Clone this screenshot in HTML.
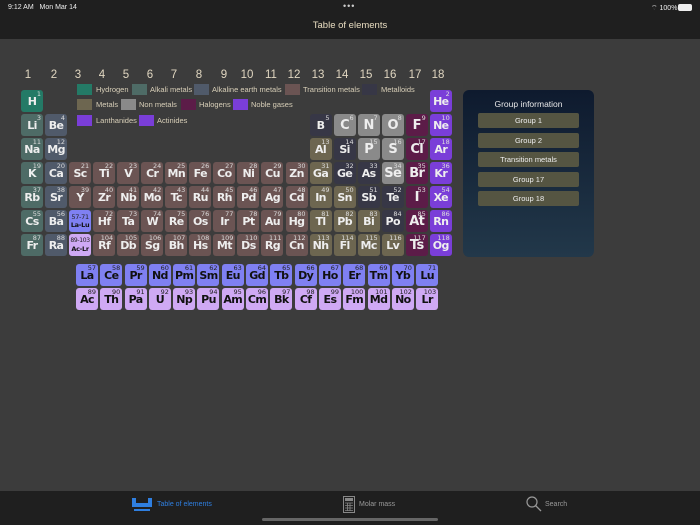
<!DOCTYPE html>
<html><head><meta charset="utf-8"><style>
*{margin:0;padding:0;box-sizing:border-box}
body{width:700px;height:525px;background:#3c3c3c;font-family:"Liberation Sans",sans-serif;position:relative;overflow:hidden;color:#ddd}
.top{position:absolute;left:0;top:0;width:700px;height:39px;background:#1f1f1f}
.bot{position:absolute;left:0;top:491px;width:700px;height:34px;background:#1f1f1f}
.g{position:absolute;top:90px;left:21px;display:grid;grid-template-columns:repeat(18,22px);grid-auto-rows:22px;column-gap:2.06px;row-gap:2px}
.l{position:absolute;left:76px;top:264px;display:grid;grid-template-columns:repeat(15,22px);grid-auto-rows:22px;column-gap:2.3px;row-gap:2px}
.g div,.l div{border-radius:3px;position:relative;font-family:"DejaVu Sans",sans-serif;font-weight:bold;font-size:11px;color:#eee;text-align:center;line-height:23px;letter-spacing:-0.6px;white-space:nowrap}
.g div i,.l div i{position:absolute;right:2px;top:1px;line-height:7px;font-style:normal;font-weight:normal;font-size:6.5px;color:#ddd;letter-spacing:0}
.h{background:#247a66}.a{background:#4e6b66}.e{background:#505a6a}.t{background:#6b5453}.m{background:#373746}.x{background:#6d6650}.n{background:#8a8a8a;font-size:13px!important}.ha{background:#5c1c48;font-size:13px!important}.ng{background:#7a3ed8}.la{background:#7f80f2}.ac{background:#cfa9f4}
.la,.ac{color:#111!important}.la i,.ac i{color:#222!important}
.gn{position:absolute;top:69px;font-size:11.5px;color:#e0d6c0;width:22px;text-align:center}
.sw{position:absolute;width:15px;height:11px}
.lt{position:absolute;font-size:7.5px;color:#d8cfb8}
.panel{position:absolute;left:463px;top:90px;width:131px;height:167px;border-radius:6px;background:linear-gradient(#0e1a2e,#22384a)}
.btn{position:absolute;left:15px;width:101px;height:15px;background:#555542;border-radius:2px;font-size:7.5px;color:#eee;text-align:center;line-height:15px}
.blk{display:flex;flex-direction:column;justify-content:center;line-height:8px!important;font-size:6.5px!important;letter-spacing:-0.3px!important;overflow:hidden}
</style></head><body>
<div class="top"></div>
<div style="position:absolute;left:8px;top:4px;font-size:7px;color:#eee">9:12 AM&nbsp;&nbsp; Mon Mar 14</div>
<div style="position:absolute;left:343px;top:1px;font-size:9px;color:#ccc;letter-spacing:1px">•••</div>
<div style="position:absolute;left:651px;top:4px;font-size:7px;color:#eee">⌔ 100%</div>
<div style="position:absolute;left:678px;top:4px;width:14px;height:7px;background:#eee;border-radius:2px"></div>
<div style="position:absolute;left:0;width:700px;top:20px;text-align:center;font-size:9.5px;color:#e8dcc0">Table of elements</div>

<div class="gn" style="left:17px">1</div><div class="gn" style="left:43px">2</div><div class="gn" style="left:67px">3</div><div class="gn" style="left:91px">4</div><div class="gn" style="left:115px">5</div><div class="gn" style="left:139px">6</div><div class="gn" style="left:163px">7</div><div class="gn" style="left:188px">8</div><div class="gn" style="left:213px">9</div><div class="gn" style="left:236px">10</div><div class="gn" style="left:260px">11</div><div class="gn" style="left:283px">12</div><div class="gn" style="left:307px">13</div><div class="gn" style="left:331px">14</div><div class="gn" style="left:355px">15</div><div class="gn" style="left:379px">16</div><div class="gn" style="left:404px">17</div><div class="gn" style="left:427px">18</div>

<div class="sw h" style="left:77px;top:84px"></div><div class="lt" style="left:96px;top:85px">Hydrogen</div>
<div class="sw a" style="left:132px;top:84px"></div><div class="lt" style="left:150px;top:85px">Alkali metals</div>
<div class="sw e" style="left:194px;top:84px"></div><div class="lt" style="left:212px;top:85px">Alkaline earth metals</div>
<div class="sw t" style="left:285px;top:84px"></div><div class="lt" style="left:303px;top:85px">Transition metals</div>
<div class="sw m" style="left:362px;top:84px"></div><div class="lt" style="left:381px;top:85px">Metalloids</div>
<div class="sw x" style="left:77px;top:99px"></div><div class="lt" style="left:96px;top:100px">Metals</div>
<div class="sw n" style="left:121px;top:99px"></div><div class="lt" style="left:139px;top:100px">Non metals</div>
<div class="sw ha" style="left:181px;top:99px"></div><div class="lt" style="left:199px;top:100px">Halogens</div>
<div class="sw ng" style="left:233px;top:99px"></div><div class="lt" style="left:251px;top:100px">Noble gases</div>
<div class="sw ng" style="left:77px;top:115px"></div><div class="lt" style="left:96px;top:116px">Lanthanides</div>
<div class="sw ng" style="left:139px;top:115px"></div><div class="lt" style="left:157px;top:116px">Actinides</div>

<div class="g">
<div class="h">H<i>1</i></div><div class="ng" style="grid-column:18">He<i>2</i></div>
<div class="a">Li<i>3</i></div><div class="e">Be<i>4</i></div><div class="m" style="grid-column:13">B<i>5</i></div><div class="n">C<i>6</i></div><div class="n">N<i>7</i></div><div class="n">O<i>8</i></div><div class="ha">F<i>9</i></div><div class="ng">Ne<i>10</i></div>
<div class="a">Na<i>11</i></div><div class="e">Mg<i>12</i></div><div class="x" style="grid-column:13">Al<i>13</i></div><div class="m">Si<i>14</i></div><div class="n">P<i>15</i></div><div class="n">S<i>16</i></div><div class="ha">Cl<i>17</i></div><div class="ng">Ar<i>18</i></div>
<div class="a">K<i>19</i></div><div class="e">Ca<i>20</i></div><div class="t">Sc<i>21</i></div><div class="t">Ti<i>22</i></div><div class="t">V<i>23</i></div><div class="t">Cr<i>24</i></div><div class="t">Mn<i>25</i></div><div class="t">Fe<i>26</i></div><div class="t">Co<i>27</i></div><div class="t">Ni<i>28</i></div><div class="t">Cu<i>29</i></div><div class="t">Zn<i>30</i></div><div class="x">Ga<i>31</i></div><div class="m">Ge<i>32</i></div><div class="m">As<i>33</i></div><div class="n">Se<i>34</i></div><div class="ha">Br<i>35</i></div><div class="ng">Kr<i>36</i></div>
<div class="a">Rb<i>37</i></div><div class="e">Sr<i>38</i></div><div class="t">Y<i>39</i></div><div class="t">Zr<i>40</i></div><div class="t">Nb<i>41</i></div><div class="t">Mo<i>42</i></div><div class="t">Tc<i>43</i></div><div class="t">Ru<i>44</i></div><div class="t">Rh<i>45</i></div><div class="t">Pd<i>46</i></div><div class="t">Ag<i>47</i></div><div class="t">Cd<i>48</i></div><div class="x">In<i>49</i></div><div class="x">Sn<i>50</i></div><div class="m">Sb<i>51</i></div><div class="m">Te<i>52</i></div><div class="ha">I<i>53</i></div><div class="ng">Xe<i>54</i></div>
<div class="a">Cs<i>55</i></div><div class="e">Ba<i>56</i></div><div class="la blk"><span style="font-weight:normal;color:#222">57-71</span>La-Lu</div><div class="t">Hf<i>72</i></div><div class="t">Ta<i>73</i></div><div class="t">W<i>74</i></div><div class="t">Re<i>75</i></div><div class="t">Os<i>76</i></div><div class="t">Ir<i>77</i></div><div class="t">Pt<i>78</i></div><div class="t">Au<i>79</i></div><div class="t">Hg<i>80</i></div><div class="x">Tl<i>81</i></div><div class="x">Pb<i>82</i></div><div class="x">Bi<i>83</i></div><div class="m">Po<i>84</i></div><div class="ha">At<i>85</i></div><div class="ng">Rn<i>86</i></div>
<div class="a">Fr<i>87</i></div><div class="e">Ra<i>88</i></div><div class="ac blk"><span style="font-weight:normal;color:#222;font-size:6px">89-103</span>Ac-Lr</div><div class="t">Rf<i>104</i></div><div class="t">Db<i>105</i></div><div class="t">Sg<i>106</i></div><div class="t">Bh<i>107</i></div><div class="t">Hs<i>108</i></div><div class="t">Mt<i>109</i></div><div class="t">Ds<i>110</i></div><div class="t">Rg<i>111</i></div><div class="t">Cn<i>112</i></div><div class="x">Nh<i>113</i></div><div class="x">Fl<i>114</i></div><div class="x">Mc<i>115</i></div><div class="x">Lv<i>116</i></div><div class="ha">Ts<i>117</i></div><div class="ng">Og<i>118</i></div>
</div>

<div class="l">
<div class="la">La<i>57</i></div><div class="la">Ce<i>58</i></div><div class="la">Pr<i>59</i></div><div class="la">Nd<i>60</i></div><div class="la">Pm<i>61</i></div><div class="la">Sm<i>62</i></div><div class="la">Eu<i>63</i></div><div class="la">Gd<i>64</i></div><div class="la">Tb<i>65</i></div><div class="la">Dy<i>66</i></div><div class="la">Ho<i>67</i></div><div class="la">Er<i>68</i></div><div class="la">Tm<i>69</i></div><div class="la">Yb<i>70</i></div><div class="la">Lu<i>71</i></div>
<div class="ac">Ac<i>89</i></div><div class="ac">Th<i>90</i></div><div class="ac">Pa<i>91</i></div><div class="ac">U<i>92</i></div><div class="ac">Np<i>93</i></div><div class="ac">Pu<i>94</i></div><div class="ac">Am<i>95</i></div><div class="ac">Cm<i>96</i></div><div class="ac">Bk<i>97</i></div><div class="ac">Cf<i>98</i></div><div class="ac">Es<i>99</i></div><div class="ac">Fm<i>100</i></div><div class="ac">Md<i>101</i></div><div class="ac">No<i>102</i></div><div class="ac">Lr<i>103</i></div>
</div>

<div class="panel">
<div style="position:absolute;top:9px;width:131px;text-align:center;font-size:8.5px;color:#e8e8e8">Group information</div>
<div class="btn" style="top:23px">Group 1</div>
<div class="btn" style="top:43px">Group 2</div>
<div class="btn" style="top:62px">Transition metals</div>
<div class="btn" style="top:82px">Group 17</div>
<div class="btn" style="top:101px">Group 18</div>
</div>

<div class="bot"></div>
<svg style="position:absolute;left:132px;top:497px" width="22" height="16" viewBox="0 0 22 16"><path d="M0 1h4v5h12V1h4v9H0z M2 12h16v2H2z" fill="#2f7fe0"/></svg>
<div style="position:absolute;left:157px;top:501px;font-size:7px;color:#2f7fe0">Table of elements</div>
<svg style="position:absolute;left:343px;top:496px" width="12" height="17" viewBox="0 0 12 17"><rect x="0.5" y="0.5" width="11" height="16" fill="none" stroke="#888"/><rect x="2" y="2" width="8" height="3" fill="#888"/><path d="M2 7h8M2 9.5h8M2 12h8M2 14.5h8M4.5 7v8M7 7v8" stroke="#888" stroke-width="0.8"/></svg>
<div style="position:absolute;left:359px;top:501px;font-size:7px;color:#999">Molar mass</div>
<svg style="position:absolute;left:526px;top:496px" width="16" height="16" viewBox="0 0 16 16"><circle cx="6" cy="6" r="5" fill="none" stroke="#999" stroke-width="1.2"/><path d="M9.5 9.5L15 15" stroke="#999" stroke-width="1.3"/></svg>
<div style="position:absolute;left:545px;top:501px;font-size:7px;color:#999">Search</div>
<div style="position:absolute;left:262px;top:518px;width:176px;height:3px;border-radius:2px;background:#666"></div>
</body></html>
